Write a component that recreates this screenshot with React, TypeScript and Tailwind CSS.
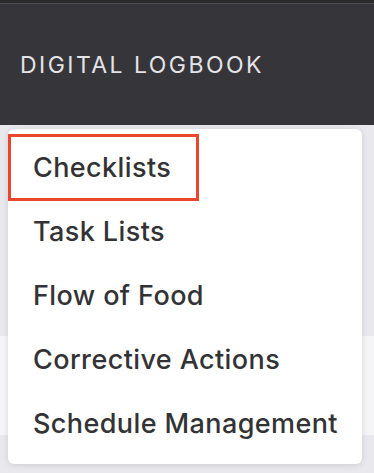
import React from 'react';

const items = ['Checklists', 'Task Lists', 'Flow of Food', 'Corrective Actions', 'Schedule Management'];

const App = () => {
  return (
    <div className="relative h-[473px] w-[374px] overflow-hidden bg-[#e9e9ed] font-['Inter',sans-serif]">
      <div className="h-[3px] bg-[#2a2a2d]" />
      <div className="h-px bg-[#4d4d51]" />
      <header className="flex h-[121px] items-center bg-[#36353a] px-[20px]">
        <h1 className="pt-px text-[23px] font-normal tracking-[2.45px] text-[#e4e4e8]">DIGITAL LOGBOOK</h1>
      </header>
      <div className="h-[211px]" />
      <div className="h-[99px] bg-[#f5f5f7]" />

      <div className="absolute left-[8px] top-[129px] w-[354px] rounded-[6px] bg-white pb-[8px] pt-[7px] shadow-[0_1px_6px_rgba(0,0,0,0.12)]">
        {items.map((item) => (
          <div key={item} className="flex h-[64px] items-center whitespace-nowrap pl-[25px] pr-[8px] text-[27px] font-medium tracking-[0.4px] text-[#333336]">
            {item}
          </div>
        ))}
      </div>

      <div className="absolute left-[8px] top-[134px] h-[67px] w-[191px] border-[3px] border-[#e9462b]" />
    </div>
  );
};

export default App;
